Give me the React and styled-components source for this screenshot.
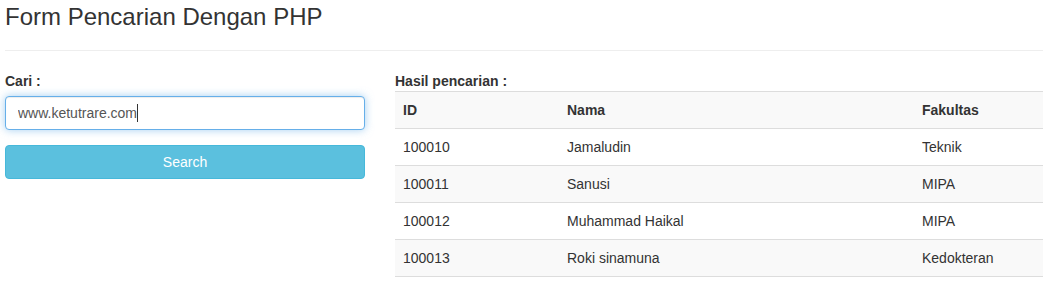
import React from "react";
import styled, { createGlobalStyle } from "styled-components";

const Global = createGlobalStyle`
  html, body { margin: 0; padding: 0; background: #fff; }
  body {
    font-family: "Liberation Sans", Arial, Helvetica, sans-serif;
    font-size: 14px;
    line-height: 20px;
    color: #333;
  }
  * { box-sizing: border-box; }
`;

const Page = styled.div`
  padding: 4px 0 0 5px;
`;

const Title = styled.h3`
  margin: 0;
  font-size: 24px;
  font-weight: 500;
  line-height: 26.4px;
  color: #333;
`;

const Rule = styled.hr`
  margin: 20px 0;
  border: 0;
  border-top: 1px solid #eee;
`;

const Row = styled.div`
  display: flex;
  gap: 30px;
  align-items: flex-start;
`;

const LeftCol = styled.div`
  flex: 0 0 360px;
  display: flex;
  flex-direction: column;
`;

const RightCol = styled.div`
  flex: 1 1 auto;
  min-width: 0;
`;

const Label = styled.label`
  display: block;
  font-weight: 700;
  margin-bottom: ${p => (p.$tight ? "0" : "5px")};
  line-height: 20px;
`;

const FieldWrap = styled.div`
  position: relative;
  margin-bottom: 15px;
`;

const Input = styled.input`
  display: block;
  width: 100%;
  height: 34px;
  padding: 6px 12px;
  font-family: inherit;
  font-size: 14px;
  line-height: 20px;
  color: #555;
  background: #fff;
  border: 1px solid #66afe9;
  border-radius: 4px;
  outline: 0;
  box-shadow: inset 0 1px 1px rgba(0,0,0,.075), 0 0 8px rgba(102,175,233,.6);
`;

const Caret = styled.span`
  position: absolute;
  left: 132px;
  top: 8px;
  width: 1px;
  height: 18px;
  background: #333;
`;

const Button = styled.button`
  display: block;
  width: 100%;
  height: 34px;
  padding: 6px 12px;
  font-family: inherit;
  font-size: 14px;
  line-height: 20px;
  color: #fff;
  background: #5bc0de;
  border: 1px solid #46b8da;
  border-radius: 4px;
  cursor: pointer;
`;

const Table = styled.table`
  width: 100%;
  border-collapse: collapse;
  border-spacing: 0;
`;

const Tr = styled.tr`
  background: ${p => (p.$striped ? "#f9f9f9" : "#fff")};
`;

const Th = styled.th`
  padding: 8px;
  text-align: left;
  font-weight: 700;
  line-height: 20px;
  border-top: 1px solid #ddd;
  vertical-align: top;
`;

const Td = styled.td`
  padding: 8px;
  line-height: 20px;
  border-top: 1px solid #ddd;
  vertical-align: top;
`;

const EndRow = styled.tr`
  td { border-top: 1px solid #ddd; padding: 0; height: 10px; }
`;

const rows = [
  ["100010", "Jamaludin", "Teknik"],
  ["100011", "Sanusi", "MIPA"],
  ["100012", "Muhammad Haikal", "MIPA"],
  ["100013", "Roki sinamuna", "Kedokteran"],
];

export default function App() {
  return (
    <>
      <Global />
      <Page>
        <Title>Form Pencarian Dengan PHP</Title>
        <Rule />
        <Row>
          <LeftCol>
            <Label htmlFor="cari">Cari :</Label>
            <FieldWrap>
              <Input id="cari" type="text" defaultValue="www.ketutrare.com" />
              <Caret />
            </FieldWrap>
            <Button type="button">Search</Button>
          </LeftCol>
          <RightCol>
            <Label as="div" $tight>Hasil pencarian :</Label>
            <Table>
              <colgroup>
                <col style={{ width: 164 }} />
                <col style={{ width: 355 }} />
                <col />
              </colgroup>
              <tbody>
                <Tr $striped>
                  <Th>ID</Th>
                  <Th>Nama</Th>
                  <Th>Fakultas</Th>
                </Tr>
                {rows.map((r, i) => (
                  <Tr key={r[0]} $striped={i % 2 === 1}>
                    <Td>{r[0]}</Td>
                    <Td>{r[1]}</Td>
                    <Td>{r[2]}</Td>
                  </Tr>
                ))}
                <EndRow>
                  <td colSpan={3} />
                </EndRow>
              </tbody>
            </Table>
          </RightCol>
        </Row>
      </Page>
    </>
  );
}
